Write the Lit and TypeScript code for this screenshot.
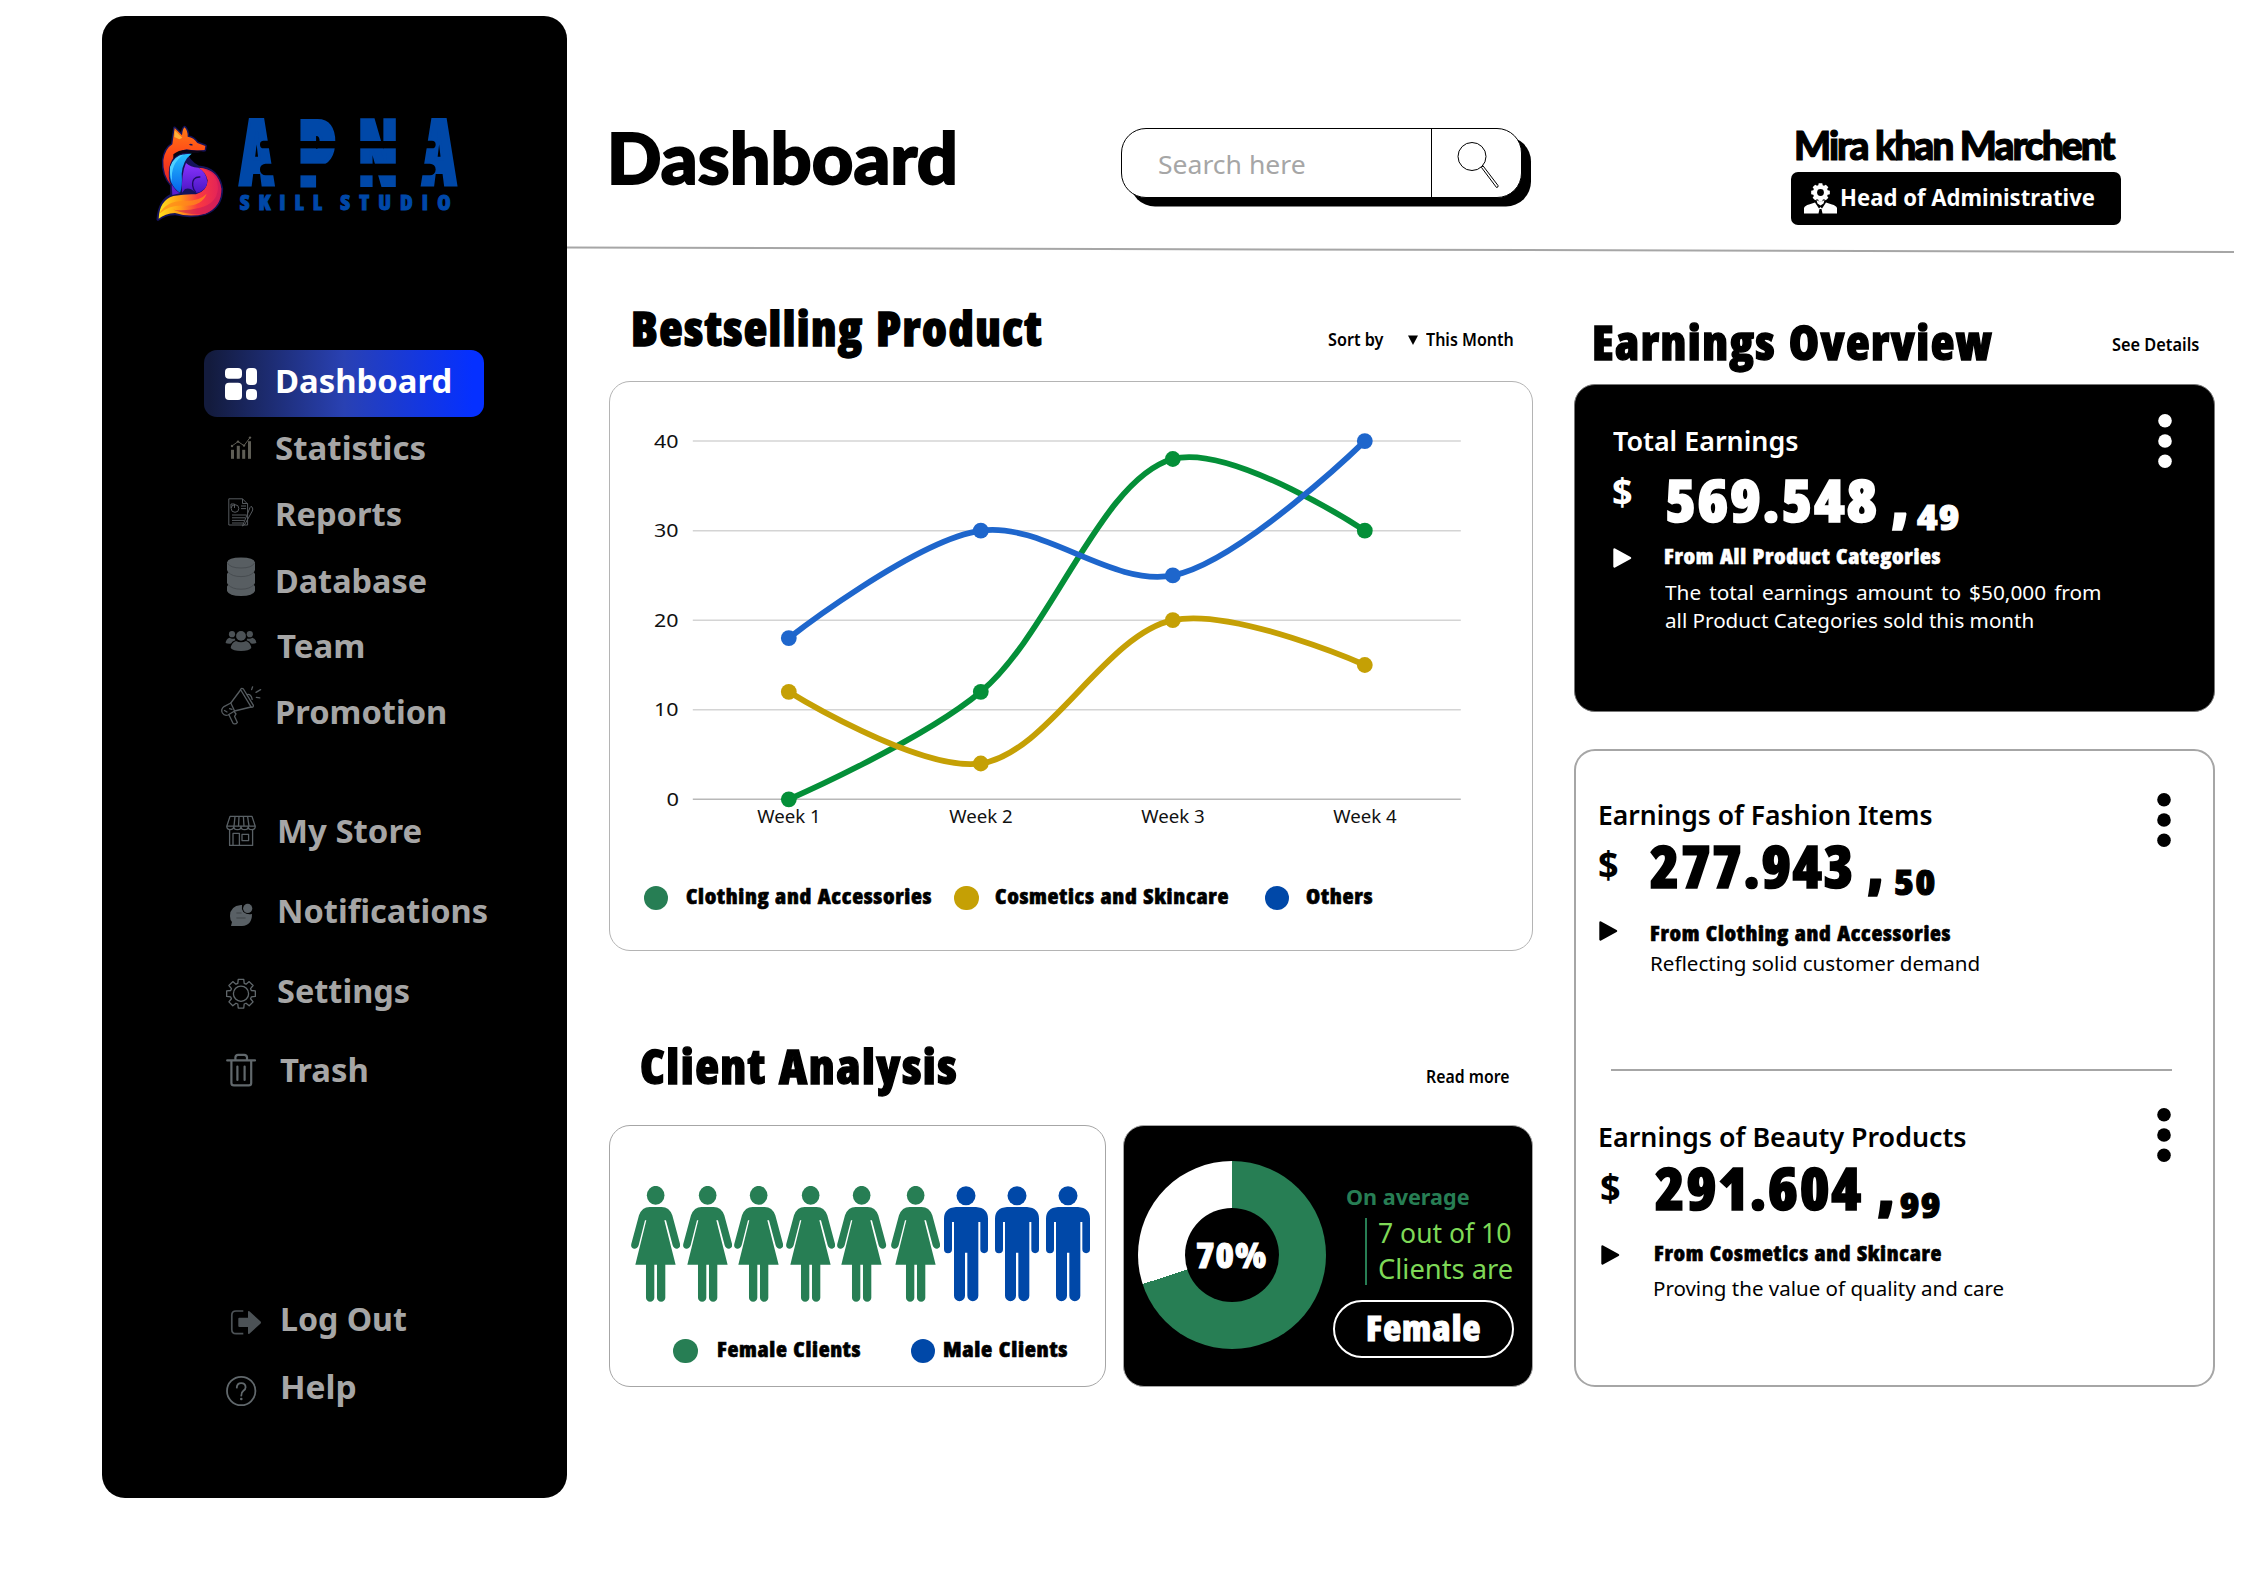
import { LitElement, html, svg, css } from "lit";
import { customElement, property } from "lit/decorators.js";

const GREEN = "#277e54";
const GOLD = "#c5a005";
const BLUE = "#0048a8";

/** One line of text whose ink is fitted to a given width. */
@customElement("ui-text")
class UiText extends LitElement {
  @property({ type: Number }) w = 0;
  @property() text = "";

  static styles = css`
    :host {
      display: block;
      flex: none;
      height: 1em;
      line-height: 1;
      white-space: nowrap;
    }
    .line {
      display: inline-block;
      transform-origin: 0 0;
    }
  `;

  render() {
    return html`<span class="line">${this.text}</span>`;
  }

  updated() {
    const line = this.renderRoot.querySelector<HTMLElement>(".line")!;
    const cs = getComputedStyle(line);
    const ctx: any = document.createElement("canvas").getContext("2d")!;
    ctx.font = `${cs.fontWeight} ${cs.fontSize} ${cs.fontFamily}`;
    if (cs.fontStretch === "75%") ctx.fontStretch = "condensed";
    if (cs.letterSpacing !== "normal") ctx.letterSpacing = cs.letterSpacing;
    ctx.wordSpacing = cs.wordSpacing;
    const m = ctx.measureText(this.text);
    const ink = m.actualBoundingBoxRight + m.actualBoundingBoxLeft;
    const k = this.w / ink;
    this.style.width = `${this.w}px`;
    line.style.transform = `translateX(${m.actualBoundingBoxLeft * k}px) scaleX(${k})`;
  }
}

const t = (text: string, w: number, cls = "") =>
  html`<ui-text class=${cls} .text=${text} .w=${w}></ui-text>`;

/* ---------- sidebar icons, drawn on a 72 x 66 cell ---------- */

const gear = (cx: number, cy: number, ro: number, ri: number, n = 8) => {
  const pts: string[] = [];
  const step = (Math.PI * 2) / n;
  for (let i = 0; i < n; i++) {
    const a = i * step - Math.PI / 2;
    for (const [da, r] of [[-0.3, ri], [-0.19, ro], [0.19, ro], [0.3, ri]]) {
      pts.push(`${(cx + r * Math.cos(a + da)).toFixed(2)} ${(cy + r * Math.sin(a + da)).toFixed(2)}`);
    }
  }
  return `M${pts.join("L")}Z`;
};

const icons: Record<string, unknown> = {
  dashboard: svg`<g fill="#fff">
    <rect x="21" y="18" width="17" height="10.8" rx="4"/><rect x="21" y="32.7" width="17" height="17.3" rx="4"/>
    <rect x="42" y="18" width="11" height="17" rx="4"/><rect x="42" y="39" width="11" height="11" rx="4"/></g>`,
  statistics: svg`<g fill="#5f5e56"><rect x="27" y="33.8" width="3" height="9"/><rect x="32.8" y="29.8" width="3" height="13"/>
    <rect x="38.2" y="33.8" width="3" height="9"/><rect x="44" y="25.2" width="3" height="17.6"/></g>
    <path d="M28 30L34 25.6L40 29.6L46 21.6" fill="none" stroke="#5f5e56" stroke-width="1"/>
    <g fill="#5f5e56"><circle cx="28" cy="30" r="1.2"/><circle cx="34" cy="25.6" r="1.2"/><circle cx="40" cy="29.6" r="1.2"/><circle cx="46" cy="21.6" r="1.2"/></g>`,
  reports: svg`<g fill="none" stroke="#565a5e" stroke-width="1">
    <path d="M38.5 16.8H24.8V43H43.6V22L38.5 16.8V21.5H43.6"/><circle cx="31" cy="26.5" r="3.8"/><path d="M27 26V22H30.5V26"/>
    <path d="M37 24h5M37 26.6h5M28 33h14M28 35.8h13M28 38.4h12M28 41h11"/>
    <path d="M38.5 44L46 25.5Q47 23.5 48 25Q49.5 27 48.3 29L41 42Z"/></g>`,
  database: svg`<path fill="#585e62" d="M23 13.4Q24 8.4 37 8.4T51 13.4V21Q50 22.5 50 23.5L51 25V34Q50 35.3 50 36L51 37.5V42Q49 47 37 47T23 42V37.5L24 36Q24 35.3 23 34V25L24 23.5Q24 22.5 23 21Z"/>
    <g fill="none" stroke="#474c50" stroke-width="1"><path d="M23.5 14Q26 19 37 19T50.5 14"/><path d="M24 23Q28 27.6 37 27.6T50 23M24 35.5Q28 40.2 37 40.2T50 35.5"/></g>`,
  team: svg`<g fill="#4c5256"><circle cx="37" cy="20.9" r="4.9"/><circle cx="28" cy="19.2" r="3.1"/><circle cx="45.8" cy="19.2" r="3.1"/>
    <path d="M26.7 33Q27.5 27.5 32 26Q37 28.6 42 26Q46.5 27.5 47.3 33Q45 36 37 36T26.7 33Z"/>
    <path d="M21.6 28Q22 24 25.5 22.8Q28 24.4 30.6 23.4Q31 24.6 31.5 25.2Q28 26 27 28.6Q23 28.8 21.6 28Z"/>
    <path d="M52.4 28Q52 24 48.5 22.8Q46 24.4 43.4 23.4Q43 24.6 42.5 25.2Q46 26 47 28.6Q51 28.8 52.4 28Z"/></g>`,
  promotion: svg`<g fill="none" stroke="#565c60" stroke-width="1.3" stroke-linejoin="round" stroke-linecap="round">
    <path d="M36.5 8.5Q37.6 6.4 39.4 8L49.4 24.4Q49.4 26.6 47.2 26.2Z"/><path d="M36.5 9L26.8 22L30.6 30L47 26"/>
    <path d="M26.8 22L20 25.6Q16.4 28.6 18.4 32Q20.4 35.2 24 34L30.6 30"/><path d="M25 34L29 42.2Q31.6 44 33.4 41.4L30.6 35.4L32 33L30 30.4"/>
    <path d="M20.5 29.5L23 31M25.6 27.6L28 28.4"/><path d="M43 13.6Q47 12.6 48.2 18.4"/>
    <path d="M47.6 8.6L48.6 5.8M52 11.4L56.6 8.6M52.4 16.4L55.8 16.8"/></g>`,
  store: svg`<g fill="none" stroke="#596065" stroke-width="1.3" stroke-linejoin="round">
    <path d="M26 16.4H48L51.2 26.2H22.8Z"/><path d="M31 16.4L30 26.2M35 16.4L34.5 26.2M39.4 16.4L40 26.2M43.6 16.4L45 26.2"/>
    <path d="M22.8 26.2q0 3.4 3.4 3.4t3.6-3.2q0 3.2 3.6 3.2t3.6-3.2q0 3.2 3.6 3.2t3.6-3.2q0 3.2 3.6 3.2t3.4-3.4"/>
    <path d="M25.6 29.6V45.4H48.6V29.6M29 45V33.4h6.4V45M38 34.4h6.6v6.2H38Z"/></g>`,
  notifications: svg`<path fill="#596065" d="M37 25Q26 26 26 36Q26 40 28 42L27 46H38Q48 45.4 48 34Q43 35 39.4 32Q37.2 29 38 25Z"/>
    <circle cx="43.7" cy="28.4" r="4.6" fill="#596065"/><path d="M33 33H37M33 38H41" stroke="#474c50" stroke-width="1.6" stroke-linecap="round"/>`,
  settings: svg`<path d=${gear(37, 33.7, 14.6, 10.8)} fill="none" stroke="#61686c" stroke-width="1.3" stroke-linejoin="round"/>
    <circle cx="37" cy="33.7" r="7.6" fill="none" stroke="#61686c" stroke-width="1.3"/>`,
  trash: svg`<g fill="none" stroke="#61686c" stroke-width="2.2" stroke-linecap="round" stroke-linejoin="round">
    <path d="M23.2 20.4H51M31.4 20V17.4Q31.6 14.8 34 14.8H40.2Q42.8 14.8 43 17.4V20"/>
    <path d="M27.4 21V43Q27.4 45.4 30 45.4H44.8Q47.2 45.4 47.2 43V21M33.4 26.6V40M40.6 26.6V40"/></g>`,
  logout: svg`<path d="M39.3 23H32Q27.8 23 27.8 27.2V41.4Q27.8 45.6 32 45.6H39.3" fill="none" stroke="#4c5256" stroke-width="1.7"/>
    <path d="M35.4 29.7H44V24Q44 22.4 45.4 23.2L56.6 33.6Q57.4 34.5 56.6 35.4L45.4 45.8Q44 46.6 44 45V39H35.4Q34.3 39 34.3 37.9V30.8Q34.3 29.7 35.4 29.7Z" fill="#4c5256"/>`,
  help: svg`<g fill="none" stroke="#61686c" stroke-width="1.8"><circle cx="37.2" cy="35" r="14.2"/>
    <path d="M32.8 31.6Q33 27.2 37.2 27.2T41.6 31.2Q41.6 33.2 39.4 34.8T37.3 39.6" stroke-linecap="round"/></g><circle cx="37.3" cy="43" r="1.3" fill="#61686c"/>`,
};

const icon = (name: string) => html`<svg class="icon" viewBox="0 0 72 66">${icons[name]}</svg>`;

const logo = html`<svg class="logo" viewBox="198 350 910 320">
  <defs>
    <linearGradient id="tail" x1="0" y1="0" x2="1" y2="0"><stop offset="0" stop-color="#ffe11c"/><stop offset=".35" stop-color="#ff9a17"/><stop offset=".62" stop-color="#fb3a3f"/><stop offset="1" stop-color="#e0205c"/></linearGradient>
    <linearGradient id="coat" x1="0" y1="0" x2="0" y2="1"><stop offset="0" stop-color="#ff7a14"/><stop offset=".45" stop-color="#ff4a18"/><stop offset="1" stop-color="#e0202a"/></linearGradient>
    <linearGradient id="chest" x1="0" y1="0" x2="0" y2="1"><stop offset="0" stop-color="#27c1ff"/><stop offset="1" stop-color="#0560ea"/></linearGradient>
    <linearGradient id="haunch" x1="0" y1="0" x2="0" y2="1"><stop offset="0" stop-color="#8a34ff"/><stop offset="1" stop-color="#4a16c4"/></linearGradient>
  </defs>
  <g stroke="#14125a" stroke-width="9" stroke-linejoin="round">
    <path d="M247 432L254 383L276 405Q278 384 284 381Q294 392 293 409Q312 412 322 428L346 437L344 449Q310 452 290 457Q290 480 325 500Q385 505 395 565Q395 620 345 640Q300 652 255 640Q225 640 204 657Q208 600 245 584V555Q218 525 220 480Q225 445 247 432Z" fill="#14125a"/>
  </g>
  <path d="M325 502Q385 505 394 565Q395 620 345 640Q300 652 255 638Q225 640 206 655Q208 600 250 587Q290 580 318 582Q352 572 353 540Q348 515 325 502Z" fill="url(#tail)"/>
  <path d="M340 507Q384 520 384 565Q380 610 330 622Q285 634 250 628Q300 646 345 640Q395 620 394 565Q385 510 340 507Z" fill="#c91a58" opacity=".6"/>
  <path d="M208 640Q230 600 285 602Q330 602 350 580Q335 618 285 616Q240 612 208 640Z" fill="#ff8a1a" opacity=".75"/>
  <path d="M247 432L254 383L276 405Q278 384 284 381Q294 392 293 409Q312 412 322 428L346 437L344 449Q310 452 290 447Q250 455 238 500Q233 535 243 553Q218 525 220 480Q225 445 247 432Z" fill="url(#coat)"/>
  <path d="M254 390L253 410L268 417L277 412Z" fill="#ffb03a"/>
  <path d="M297 432Q303 428 309 434Q302 438 297 432Z" fill="#14125a"/>
  <path d="M250 462Q270 445 300 450L340 452Q325 461 290 457Q265 458 250 475Z" fill="#090414"/>
  <path d="M305 460Q270 458 250 482Q232 512 243 545Q254 568 270 577Q278 560 275 520Q278 480 305 460Z" fill="url(#chest)"/>
  <path d="M282 462Q240 490 246 545Q238 520 240 500Q252 466 282 462Z" fill="#4fd0ff"/>
  <path d="M288 488Q300 500 325 502Q350 515 352 545Q350 572 318 578Q300 560 285 566L276 577Q274 520 288 488Z" fill="url(#haunch)"/>
  <path d="M331 530Q306 528 308 556Q310 570 318 577" fill="none" stroke="#1f0b66" stroke-width="4"/>
  <path d="M245 552L247 584L270 579Q255 570 245 552Z" fill="#5a1fd0"/>
  <g class="logo-big">
    <text x="449" y="555" textLength="101" lengthAdjust="spacingAndGlyphs">A</text>
    <text x="623" y="555" textLength="114" lengthAdjust="spacingAndGlyphs">P</text>
    <text x="804" y="555" textLength="120" lengthAdjust="spacingAndGlyphs">N</text>
    <text x="997" y="555" textLength="101" lengthAdjust="spacingAndGlyphs">A</text>
  </g>
  <g fill="#000">
    <rect x="510" y="421" width="60" height="23" rx="11"/><rect x="510" y="490" width="60" height="35" rx="17"/>
    <rect x="600" y="422" width="340" height="22"/><rect x="600" y="490" width="340" height="35"/>
    <rect x="977" y="421" width="60" height="23" rx="11"/><rect x="977" y="490" width="60" height="35" rx="17"/>
  </g>
  <g class="logo-small">
    <text x="449" y="630" textLength="247">SKILL</text><text x="751" y="630" textLength="331">STUDIO</text>
  </g>
</svg>`;

/* ---------- chart ---------- */

type P = [number, number];

/** Centripetal Catmull-Rom spline through the points, as cubic segments. */
const spline = (p: P[]) => {
  const dist = (a: P, b: P) => Math.sqrt(Math.hypot(b[0] - a[0], b[1] - a[1]));
  const tangent = (i: number): P => {
    const d1 = dist(p[i - 1], p[i]);
    const d2 = dist(p[i], p[i + 1]);
    const f = (k: 0 | 1) =>
      (p[i][k] - p[i - 1][k]) / d1 - (p[i + 1][k] - p[i - 1][k]) / (d1 + d2) + (p[i + 1][k] - p[i][k]) / d2;
    return [f(0), f(1)];
  };
  let d = `M${p[0]}`;
  for (let i = 0; i < p.length - 1; i++) {
    const h = dist(p[i], p[i + 1]) / 3;
    const a = i > 0 ? tangent(i) : [0, 0];
    const b = i < p.length - 2 ? tangent(i + 1) : [0, 0];
    d += `C${p[i][0] + a[0] * h} ${p[i][1] + a[1] * h} ${p[i + 1][0] - b[0] * h} ${p[i + 1][1] - b[1] * h} ${p[i + 1]}`;
  }
  return d;
};

const series = [
  { color: "#048f38", values: [0, 12, 38, 30] },
  { color: GOLD, values: [12, 4, 20, 15] },
  { color: "#1e66cc", values: [18, 30, 25, 40] },
];

@customElement("week-chart")
class WeekChart extends LitElement {
  static styles = css`
    :host { display: block; }
    svg { display: block; width: 921px; height: 460px; }
    text { font: 400 18.7px "Noto Sans", sans-serif; fill: #111; }
  `;

  render() {
    const x0 = 82.8, y0 = 417.3, unit = 8.955;
    const px = (i: number) => x0 + 96 + i * 192;
    const py = (v: number) => y0 - v * unit;
    return html`<svg viewBox="0 0 921 460">
      ${[0, 10, 20, 30, 40].map((v) => svg`
        <path d="M${x0} ${py(v)}h768" stroke=${v ? "#d4d4d4" : "#b8b8b8"} stroke-width="1.5"/>
        <text x=${v ? 44 : 56.5} y=${py(v) + 6.6} textLength=${v ? 24.5 : 12.5} lengthAdjust="spacingAndGlyphs">${v}</text>`)}
      ${[1, 2, 3, 4].map((n, i) => svg`<text x=${px(i) - 31.5} y="440.8" textLength="63.5" lengthAdjust="spacingAndGlyphs">Week ${n}</text>`)}
      ${series.map((s) => svg`<path d=${spline(s.values.map((v, i) => [px(i), py(v)] as P))} fill="none" stroke=${s.color} stroke-width="5.8"/>
        ${s.values.map((v, i) => svg`<circle cx=${px(i)} cy=${py(v)} r="7.9" fill=${s.color}/>`)}`)}
    </svg>`;
  }
}

const woman = html`<svg class="woman" viewBox="-74 0 148 348"><g fill=${GREEN}>
  <ellipse cx="0" cy="28" rx="26.5" ry="28.5"/>
  <path d="M-18 63H18Q41 63 50 88L73 173Q76 186 65 188Q55 189 51 178L31 103H26L60 236H29V335a12.5 12.5 0 0 1-25 0V236H-4V335a12.5 12.5 0 0 1-25 0V236H-61L-28 103H-32L-51 178Q-55 189-65 188Q-76 186-73 173L-50 88Q-41 63-18 63Z"/></g></svg>`;
const man = html`<svg class="man" viewBox="-66 0 132 348"><g fill=${BLUE}>
  <circle cx="0" cy="29" r="28.5"/>
  <path d="M-30 63H30Q66 66 66 98V190a11.5 11.5 0 0 1-23 0V108H37V329a16 16 0 0 1-33 0V200H-3V329a16 16 0 0 1-33 0V108H-42V190a11.5 11.5 0 0 1-24 0V98Q-66 66-30 63Z"/></g></svg>`;

const play = html`<svg class="play" viewBox="0 0 19 20"><path d="M1.5 1.5L17 10L1.5 18.5Z" fill="currentColor" stroke="currentColor" stroke-width="2.4" stroke-linejoin="round"/></svg>`;
const dots = html`<svg class="dots" viewBox="0 0 14 54"><g fill="currentColor"><circle cx="7" cy="6.8" r="6.8"/><circle cx="7" cy="27" r="6.8"/><circle cx="7" cy="47.2" r="6.8"/></g></svg>`;

interface Earning {
  cls: string; title: [string, number]; amount: [string, number]; comma: number; cents: [string, number];
  from: [string, number]; lines: [string, number][];
}

const earnings: Earning[] = [
  { cls: "total", title: ["Total Earnings", 185], amount: ["569.548", 209], comma: 14, cents: ["49", 41],
    from: ["From All Product Categories", 275], lines: [["The total earnings amount to $50,000 from", 435], ["all Product Categories sold this month", 368]] },
  { cls: "fashion", title: ["Earnings of Fashion Items", 332], amount: ["277.943", 200], comma: 13, cents: ["50", 39],
    from: ["From Clothing and Accessories", 299], lines: [["Reflecting solid customer demand", 328]] },
  { cls: "beauty", title: ["Earnings of Beauty Products", 366], amount: ["291.604", 205], comma: 14, cents: ["99", 38],
    from: ["From Cosmetics and Skincare", 286], lines: [["Proving the value of quality and care", 350]] },
];

const earning = (e: Earning) => html`<section class="earning ${e.cls}">
  <div>
    ${t(e.title[0], e.title[1], "e-title")}
    <div class="e-amount">
      ${t("$", 18.5, "e-cur")}${t(e.amount[0], e.amount[1], "display e-main")}${t(",", e.comma, "display e-comma")}${t(e.cents[0], e.cents[1], "display e-cents")}
    </div>
    <div class="e-from">${play}${t(e.from[0], e.from[1], "display label")}</div>
    <div class="e-lines">${e.lines.map(([s, w]) => t(s, w, "e-line"))}</div>
  </div>
  ${dots}
</section>`;

const navGroups: { cls: string; items: [string, string, number][] }[] = [
  { cls: "g1", items: [["dashboard", "Dashboard", 173], ["statistics", "Statistics", 149], ["reports", "Reports", 124], ["database", "Database", 149], ["team", "Team", 86], ["promotion", "Promotion", 168.5]] },
  { cls: "g2", items: [["store", "My Store", 142], ["notifications", "Notifications", 208], ["settings", "Settings", 131], ["trash", "Trash", 87]] },
  { cls: "g3", items: [["logout", "Log Out", 124], ["help", "Help", 73.5]] },
];

@customElement("app-root")
class AppRoot extends LitElement {
  static styles = css`
    :host {
      display: block;
      width: 2245px;
      height: 1587px;
      overflow: hidden;
      background: #fff;
      color: #000;
      font-family: "Noto Sans", "Open Sans", sans-serif;
    }
    * { box-sizing: border-box; }
    svg { display: block; flex: none; }
    .page { display: flex; width: 2245px; height: 1587px; padding-left: 102px; }
    .display { font-family: "Open Sans", "Noto Sans", sans-serif; font-weight: 800; font-stretch: 75%; letter-spacing: 0.03em; word-spacing: 0.05em; -webkit-text-stroke: 0.028em currentColor; }

    .sidebar { width: 465px; height: 1482px; margin-top: 16px; padding-top: 100.7px; border-radius: 23px; background: #000; flex: none; }
    .logo { width: 303.3px; height: 106.7px; margin-left: 54px; overflow: visible; }
    .logo-big text { font: 800 273px "Open Sans", sans-serif; font-stretch: 75%; fill: #0048a8; stroke: #0048a8; stroke-width: 12px; }
    .logo-small text { font: 800 65px "Open Sans", sans-serif; font-stretch: 75%; fill: #0048a8; stroke: #0048a8; stroke-width: 3px; }
    nav { display: flex; flex-direction: column; margin-left: 102px; }
    .group { display: flex; flex-direction: column; font-weight: 700; font-size: 32px; color: #a6a6a6; }
    .g1 { margin-top: 126.6px; }
    .g2 { margin-top: 52.8px; }
    .g3 { margin-top: 168px; }
    .item { display: flex; width: 300px; height: 66.2px; }
    .g2 .item { height: 80px; }
    .g3 .item { height: 68px; }
    .item ui-text { margin: 16px 0 0 1px; }
    .item:nth-child(2) ui-text { margin-left: 0; }
    .g1 .item:nth-child(n + 5) ui-text { margin-top: 14.8px; }
    .g2 .item ui-text { margin: 15px 0 0 3px; }
    .g2 .item:nth-child(3) ui-text { margin-left: 2.2px; }
    .g2 .item:last-child ui-text { margin: 14.4px 0 0 3.8px; }
    .g3 .item ui-text { margin: 15px 0 0 6px; }
    .item.active { width: 280px; height: 67.2px; margin-bottom: -1px; border-radius: 13px; color: #fff; background: linear-gradient(90deg, #131b3d 2%, #2941b3 50%, #0530ff 96%); }
    .item.active ui-text { margin: 14.6px 0 0 0.8px; }
    .icon { width: 72px; height: 66px; }

    main { width: 1678px; flex: none; }
    header { display: flex; align-items: flex-start; height: 246px; }
    .title { margin: 114.500px 0 0 45px; font: 900 69.6px Lato, sans-serif; -webkit-text-stroke: 1.8px #000; }
    .search { display: flex; width: 401px; height: 70px; margin: 128px 0 0 167px; border: 1.5px solid #000; border-radius: 25px; background: #fff; box-shadow: 9px 8.5px 0 #000; }
    .search .field { width: 310px; padding: 22px 0 0 37px; border-right: 1.5px solid #000; font-size: 26px; color: #a6a6a6; }
    .search svg { width: 42px; height: 48px; margin: 12px 0 0 24.5px; }
    .user { margin: 121px 0 0 269px; }
    .name { margin-left: 5.500px; font: 900 39.5px Lato, sans-serif; letter-spacing: -2px; -webkit-text-stroke: 1.2px #000; }
    .badge { display: flex; width: 330px; height: 53px; margin-top: 11.5px; padding-left: 13px; border-radius: 7px; background: #000; color: #fff; font-size: 23.5px; font-weight: 700; }
    .badge svg { width: 33px; height: 31px; margin-top: 11px; }
    .badge ui-text { margin: 14px 0 0 4.500px; }
    .rule { width: 1667px; height: 10px; }

    .content { display: flex; gap: 41.500px; padding-left: 41.500px; }
    .center { width: 924px; }
    .right { width: 640.5px; }
    .head { display: flex; align-items: flex-start; justify-content: space-between; font-size: 17px; font-weight: 600; }
    .head .display { font-size: 47.2px; }
    .h1 { height: 124.5px; padding: 49px 19.5px 0 24.5px; }
    .h2 { height: 174px; padding: 92px 23.5px 0 32.5px; }
    .h3 { height: 128px; padding: 63.300px 15.5px 0 20px; }
    .sort { display: flex; margin-top: 26px; }
    .sort svg { width: 10px; height: 10px; margin: 4px 8px 0 24.5px; }
    .h2 .more { margin-top: 25.5px; }
    .h3 .more { margin-top: 17px; }
    .card { border: 1.5px solid #a6a6a6; border-radius: 21px; background: #fff; }
    .card.dark { background: #000; color: #fff; }
    .label { font-size: 21.3px; }
    .dot { width: 24.6px; height: 24.6px; border-radius: 50%; flex: none; }
    .green { background: #277e54; }
    .gold { background: #c5a005; }
    .blue { background: #0048a8; }

    .chart { height: 570px; border-color: #b4b4b4; }
    .legend { display: flex; }
    .chart .legend { margin: 44px 0 0 34px; }
    .chart .label { margin: -0.5px 35px 0 18px; }
    .chart .label.l1 { margin-right: 23px; }
    .chart .label.l2 { margin-right: 37px; margin-left: 16px; }
    .chart .label.l3 { margin-left: 16.5px; }

    .bottom { display: flex; justify-content: space-between; }
    .people { width: 497px; height: 262px; }
    .crowd { display: flex; margin: 60px 0 0 21.500px; height: 116px; }
    .woman { width: 49.3px; height: 116px; margin-right: 2.3px; }
    .man { width: 44px; height: 116px; margin-right: 7px; }
    .gap { width: 2px; }
    .gap2 { width: 1.2px; }
    .people .legend { margin: 37px 0 0 63.500px; }
    .people .label { margin: -1px 0 0 20px; }
    .people .label.m { margin-left: 9px; }
    .people .dot.blue { margin-left: 51px; }

    .share { display: flex; width: 410px; height: 262px; }
    .donut { width: 188px; height: 188px; margin: 35.5px 0 0 14.5px; border-radius: 50%; background: conic-gradient(#277e54 0 252deg, #fff 252deg 360deg); padding: 47px; flex: none; }
    .hole { width: 94px; height: 94px; padding: 29px 0 0 12px; border-radius: 50%; background: #000; font-size: 36px; }
    .facts { padding-top: 61px; }
    .avg { margin-left: 20.5px; color: #277e54; font-size: 21px; font-weight: 700; }
    .quote { display: flex; flex-direction: column; gap: 8px; height: 67px; margin: 10.5px 0 0 39px; padding-left: 11.5px; border-left: 2px solid #277e54; color: #7ed957; font-size: 28px; }
    .pill { width: 181px; height: 58px; margin: 15px 0 0 6.500px; padding: 7.5px 0 0 33.5px; border: 2px solid #fff; border-radius: 29px; font-size: 36px; }

    .first { height: 328px; border-color: #777; }
    .second { height: 638px; margin-top: 37px; border-width: 2px; }
    .earning { display: flex; justify-content: space-between; align-items: flex-start; }
    .dots { width: 14px; height: 54px; }
    .e-title { font-size: 27.5px; font-weight: 600; }
    .e-amount, .e-from { display: flex; align-items: flex-start; }
    .e-cur { font-size: 37px; font-weight: 700; }
    .e-main, .e-comma { font-size: 58.8px; }
    .e-cents { font-size: 34.6px; margin-top: 30.5px; }
    .play { width: 19px; height: 20px; }
    .e-line { font-size: 19.8px; }

    .total { padding: 28.5px 42px 0 37.5px; height: 300px; }
    .total .e-title { margin: 13.8px 0 0 0; }
    .total .e-amount { margin-top: 14.8px; }
    .total .e-cur { margin-top: 3px; }
    .total .e-main { margin-left: 35.5px; }
    .total .e-comma { margin-left: 16px; }
    .total .e-cents { margin-left: 11.500px; }
    .total .e-from { margin-top: 13px; }
    .total .label { margin: -3px 0 0 33px; }
    .total .e-lines { margin: 15.4px 0 0 52px; display: flex; flex-direction: column; gap: 8.2px; }
    .total .e-line:first-child { word-spacing: 2.5px; }

    .fashion { padding: 40.5px 41.500px 0 22.5px; height: 317.500px; }
    .fashion .dots { margin-top: 1.5px; }
    .fashion .e-title { margin: 9.2px 0 0 1px; }
    .fashion .e-amount { margin-top: 7.4px; }
    .fashion .e-cur { margin-top: 10.500px; }
    .fashion .e-main { margin-left: 34px; }
    .fashion .e-comma { margin-left: 17px; }
    .fashion .e-cents { margin: 29.5px 0 0 13.500px; }
    .fashion .e-from { margin-top: 21.500px; }
    .fashion .label { margin: 1px 0 0 33.500px; }
    .fashion .e-lines { margin: 11px 0 0 52.5px; }

    .line { width: 561px; height: 2px; margin-left: 35px; background: #a6a6a6; }
    .beauty { padding: 37px 41.500px 0 23px; }
    .beauty .e-title { margin: 15.6px 0 0 1px; }
    .beauty .e-amount { margin: 7px 0 0 2px; }
    .beauty .e-cur { margin-top: 11.5px; }
    .beauty .e-main { margin-left: 36px; }
    .beauty .e-comma { margin-left: 17px; }
    .beauty .e-cents { margin-left: 9.500px; }
    .beauty .e-from { margin: 22px 0 0 2px; }
    .beauty .label { margin: -2.5px 0 0 35px; }
    .beauty .e-lines { margin: 14.500px 0 0 55px; }
  `;

  render() {
    return html`<div class="page">
      <aside class="sidebar">
        ${logo}
        <nav>
          ${navGroups.map((g) => html`<div class="group ${g.cls}">
            ${g.items.map(([ic, label, w]) => html`<div class="item ${ic === "dashboard" ? "active" : ""}">${icon(ic)}${t(label, w)}</div>`)}
          </div>`)}
        </nav>
      </aside>
      <main>
        <header>
          ${t("Dashboard", 342, "title")}
          <div class="search">
            <div class="field">${t("Search here", 146)}</div>
            <svg viewBox="0 0 42 48"><g fill="none" stroke="#000" stroke-width="1"><circle cx="15" cy="15.5" r="14"/>
              <path d="M24.5 26.5L39.5 46.5Q41.5 46.5 41 44.5L26 24.8Z"/></g></svg>
          </div>
          <div class="user">
            ${t("Mira khan Marchent", 318.5, "name")}
            <div class="badge">
              <svg viewBox="0 0 33 31"><path d=${gear(16.5, 9.5, 9.5, 7.5)} fill="#fff"/><circle cx="16.5" cy="9.5" r="3.4" fill="#000"/>
                <path d="M0 30.5V25Q1 22.5 5 21.5L11 19.5L15 25.5L16.5 24L18 25.5L22 19.5L28 21.5Q32 22.5 33 25V30.5H18.5L17.5 26H15.5L14.5 30.5Z" fill="#fff"/>
                <path d="M12.5 17Q16.5 20 20.5 17L19.5 20.5L16.5 22.5L13.5 20.5Z" fill="#fff"/></svg>
              ${t("Head of Administrative", 252)}
            </div>
          </div>
        </header>
        <svg class="rule" viewBox="0 0 1667 10"><path d="M0 1.5L1667 6" stroke="#a6a6a6" stroke-width="2"/></svg>
        <div class="content">
          <div class="center">
            <div class="head h1">
              ${t("Bestselling Product", 408, "display")}
              <div class="sort">${t("Sort by", 56)}<svg viewBox="0 0 10 10"><path d="M0 0.5H10L5 10Z"/></svg>${t("This Month", 87)}</div>
            </div>
            <div class="card chart">
              <week-chart></week-chart>
              <div class="legend">
                <i class="dot green"></i>${t("Clothing and Accessories", 245, "display label l1")}
                <i class="dot gold"></i>${t("Cosmetics and Skincare", 233, "display label l2")}
                <i class="dot blue"></i>${t("Others", 66, "display label l3")}
              </div>
            </div>
            <div class="head h2">${t("Client Analysis", 315, "display")}${t("Read more", 82.5, "more")}</div>
            <div class="bottom">
              <div class="card people">
                <div class="crowd">${[1, 2, 3, 4, 5].map(() => woman)}<i class="gap"></i>${woman}<i class="gap2"></i>${[1, 2, 3].map(() => man)}</div>
                <div class="legend">
                  <i class="dot green"></i>${t("Female Clients", 142, "display label")}
                  <i class="dot blue"></i>${t("Male Clients", 123, "display label m")}
                </div>
              </div>
              <div class="card dark share">
                <div class="donut"><div class="hole">${t("70%", 69, "display")}</div></div>
                <div class="facts">
                  ${t("On average", 122, "avg")}
                  <div class="quote">${t("7 out of 10", 131.5)}${t("Clients are", 133.5)}</div>
                  <div class="pill">${t("Female", 112, "display")}</div>
                </div>
              </div>
            </div>
          </div>
          <div class="right">
            <div class="head h3">${t("Earnings Overview", 398, "display")}${t("See Details", 87, "more")}</div>
            <div class="card dark first">${earning(earnings[0])}</div>
            <div class="card second">${earning(earnings[1])}<div class="line"></div>${earning(earnings[2])}</div>
          </div>
        </div>
      </main>
    </div>`;
  }
}
